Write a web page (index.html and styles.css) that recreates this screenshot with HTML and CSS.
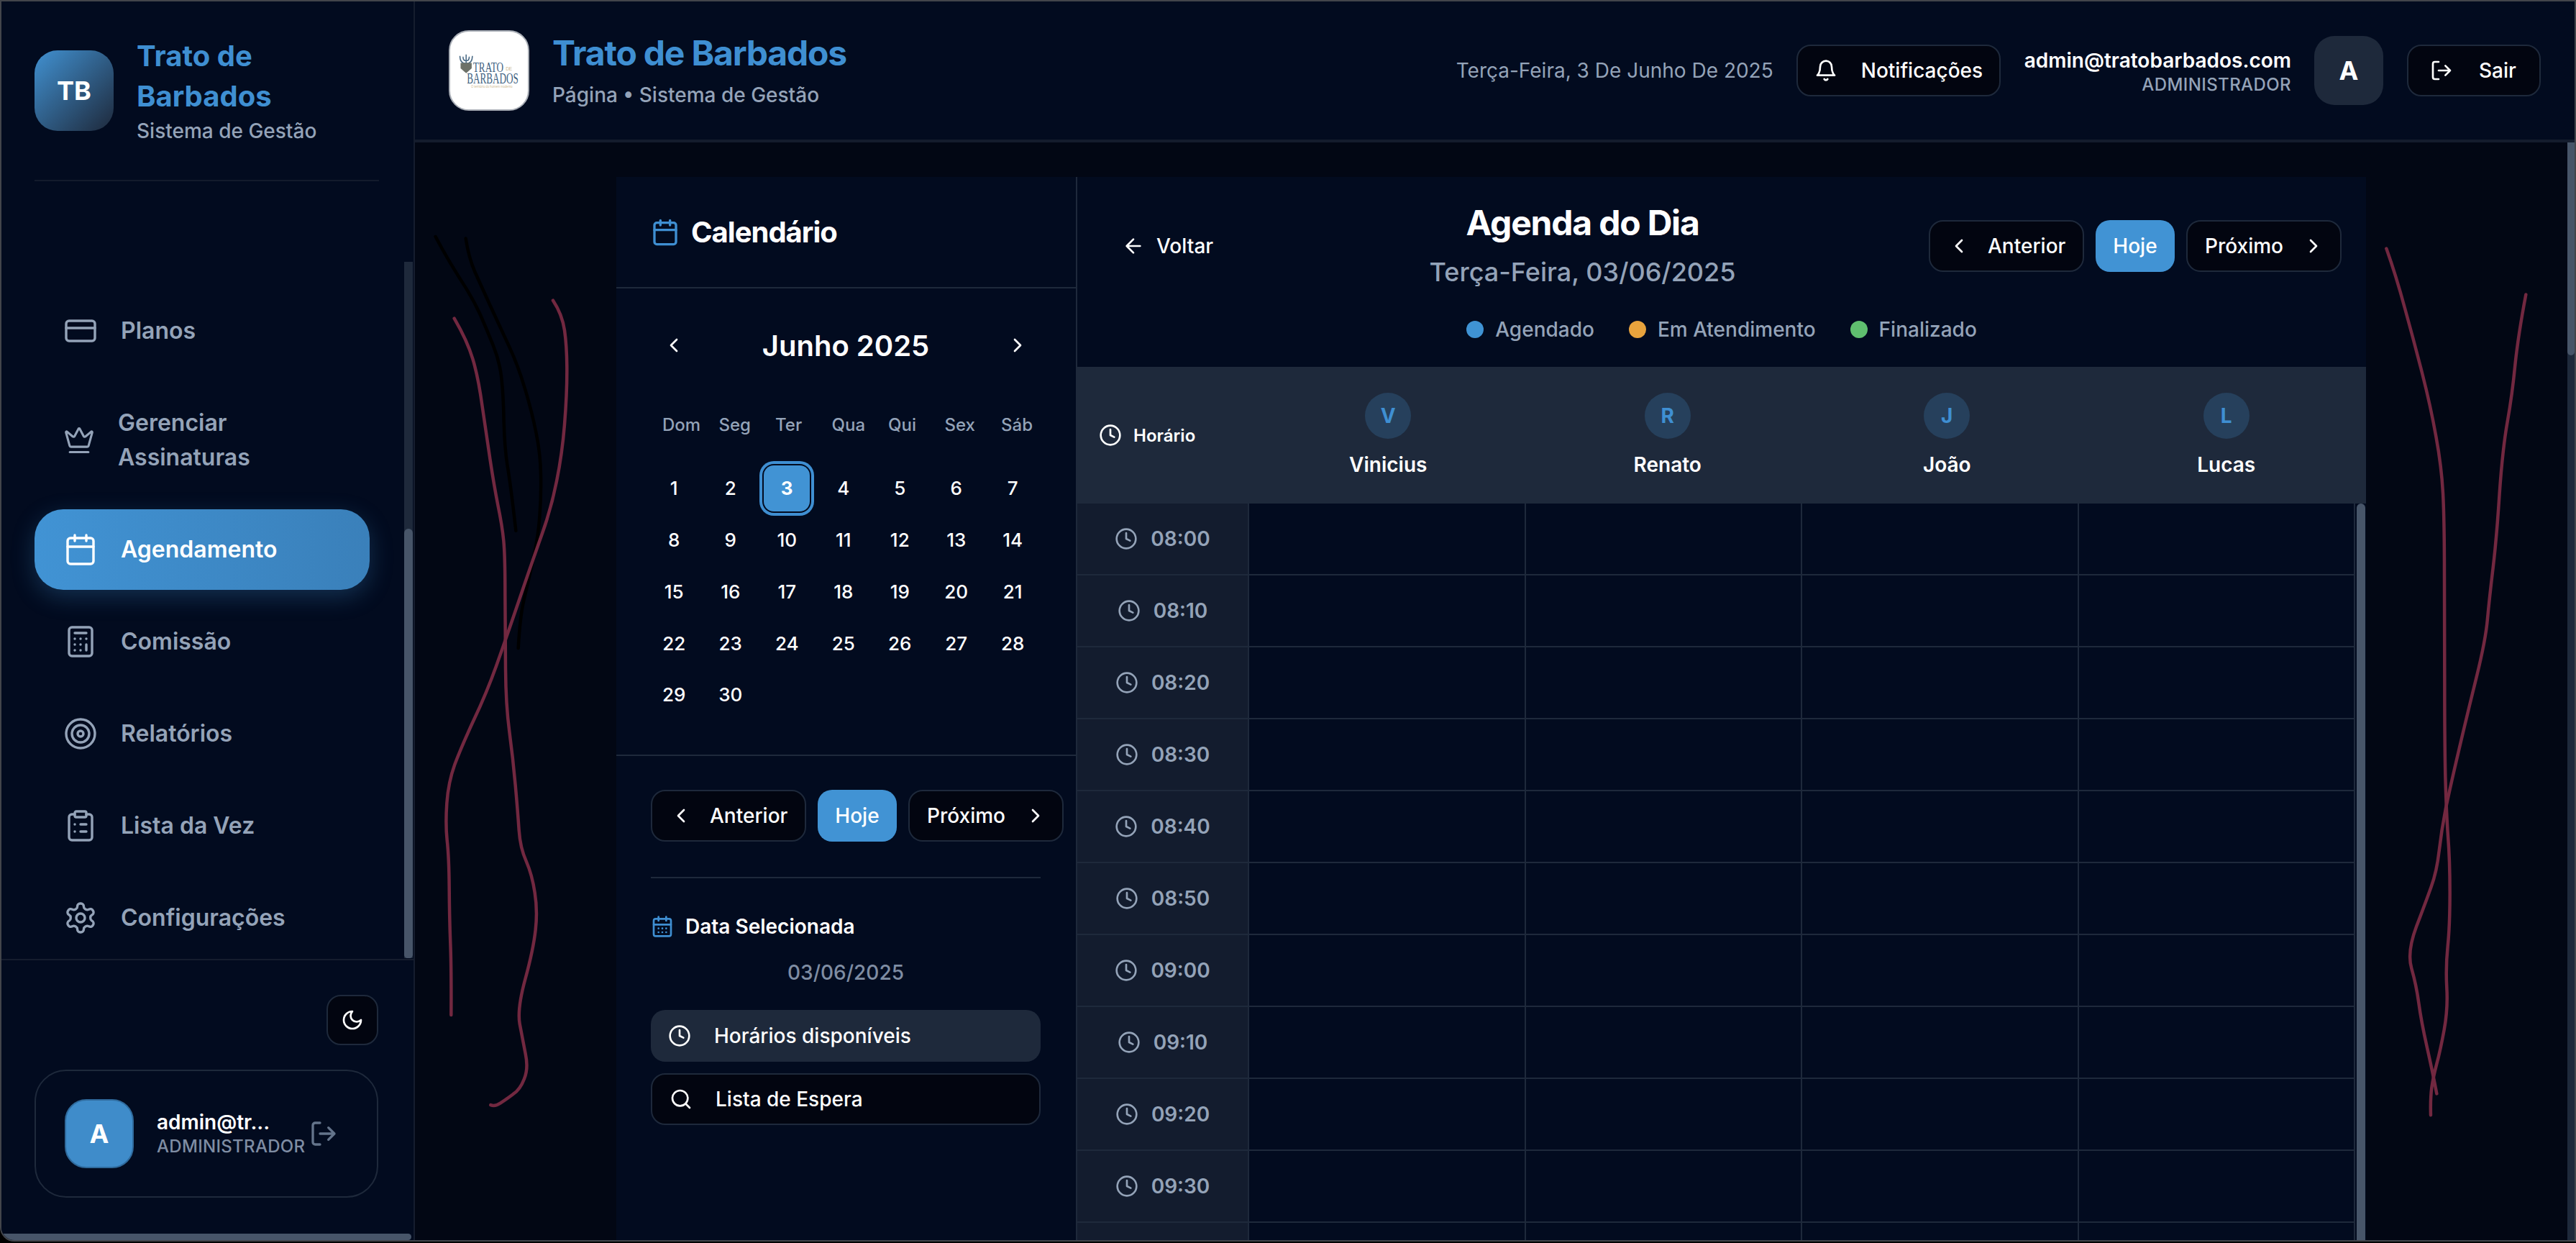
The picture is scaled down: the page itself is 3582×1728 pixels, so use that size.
FILE: index.html
```html
<!DOCTYPE html>
<html lang="pt-br">
<head>
  <meta charset="UTF-8">
  <title>Trato de Barbados</title>
  <link rel="stylesheet" href="styles.css">
</head>
<body>
  <svg class="sprite" width="0" height="0">
    <symbol id="i-card" viewBox="0 0 24 24"><rect x="2" y="5" width="20" height="14" rx="2"/><path d="M2 10h20"/></symbol>
    <symbol id="i-crown" viewBox="0 0 24 24"><path d="M11.562 3.266a.5.5 0 0 1 .876 0L15.39 8.87a1 1 0 0 0 1.516.294L21.183 5.5a.5.5 0 0 1 .798.519l-2.834 10.246a1 1 0 0 1-.956.734H5.81a1 1 0 0 1-.957-.734L2.02 6.02a.5.5 0 0 1 .798-.519l4.276 3.664a1 1 0 0 0 1.516-.294z"/><path d="M5 21h14"/></symbol>
    <symbol id="i-calendar" viewBox="0 0 24 24"><path d="M8 2v4M16 2v4"/><rect x="3" y="4" width="18" height="18" rx="2"/><path d="M3 10h18"/></symbol>
    <symbol id="i-calendar-days" viewBox="0 0 24 24"><path d="M8 2v4M16 2v4"/><rect x="3" y="4" width="18" height="18" rx="2"/><path d="M3 10h18M8 14h.01M12 14h.01M16 14h.01M8 18h.01M12 18h.01M16 18h.01"/></symbol>
    <symbol id="i-calculator" viewBox="0 0 24 24"><rect x="4" y="2" width="16" height="20" rx="2"/><path d="M8 6h8M16 14v4M16 10h.01M12 10h.01M8 10h.01M12 14h.01M8 14h.01M12 18h.01M8 18h.01"/></symbol>
    <symbol id="i-target" viewBox="0 0 24 24"><circle cx="12" cy="12" r="10"/><circle cx="12" cy="12" r="6"/><circle cx="12" cy="12" r="2"/></symbol>
    <symbol id="i-clipboard" viewBox="0 0 24 24"><rect x="8" y="2" width="8" height="4" rx="1"/><path d="M16 4h2a2 2 0 0 1 2 2v14a2 2 0 0 1-2 2H6a2 2 0 0 1-2-2V6a2 2 0 0 1 2-2h2M12 11h4M12 16h4M8 11h.01M8 16h.01"/></symbol>
    <symbol id="i-settings" viewBox="0 0 24 24"><path d="M12.22 2h-.44a2 2 0 0 0-2 2v.18a2 2 0 0 1-1 1.73l-.43.25a2 2 0 0 1-2 0l-.15-.08a2 2 0 0 0-2.73.73l-.22.38a2 2 0 0 0 .73 2.73l.15.1a2 2 0 0 1 1 1.72v.51a2 2 0 0 1-1 1.74l-.15.09a2 2 0 0 0-.73 2.73l.22.38a2 2 0 0 0 2.73.73l.15-.08a2 2 0 0 1 2 0l.43.25a2 2 0 0 1 1 1.73V20a2 2 0 0 0 2 2h.44a2 2 0 0 0 2-2v-.18a2 2 0 0 1 1-1.73l.43-.25a2 2 0 0 1 2 0l.15.08a2 2 0 0 0 2.73-.73l.22-.39a2 2 0 0 0-.73-2.73l-.15-.08a2 2 0 0 1-1-1.74v-.5a2 2 0 0 1 1-1.74l.15-.09a2 2 0 0 0 .73-2.73l-.22-.38a2 2 0 0 0-2.73-.73l-.15.08a2 2 0 0 1-2 0l-.43-.25a2 2 0 0 1-1-1.73V4a2 2 0 0 0-2-2z"/><circle cx="12" cy="12" r="3"/></symbol>
    <symbol id="i-moon" viewBox="0 0 24 24"><path d="M12 3a6 6 0 0 0 9 9 9 9 0 1 1-9-9Z"/></symbol>
    <symbol id="i-logout" viewBox="0 0 24 24"><path d="M9 21H5a2 2 0 0 1-2-2V5a2 2 0 0 1 2-2h4M16 17l5-5-5-5M21 12H9"/></symbol>
    <symbol id="i-bell" viewBox="0 0 24 24"><path d="M6 8a6 6 0 0 1 12 0c0 7 3 9 3 9H3s3-2 3-9M10.3 21a1.94 1.94 0 0 0 3.4 0"/></symbol>
    <symbol id="i-left" viewBox="0 0 24 24"><path d="m15 18-6-6 6-6"/></symbol>
    <symbol id="i-right" viewBox="0 0 24 24"><path d="m9 18 6-6-6-6"/></symbol>
    <symbol id="i-arrow" viewBox="0 0 24 24"><path d="m12 19-7-7 7-7M19 12H5"/></symbol>
    <symbol id="i-clock" viewBox="0 0 24 24"><circle cx="12" cy="12" r="10"/><path d="M12 6v6l4 2"/></symbol>
    <symbol id="i-search" viewBox="0 0 24 24"><circle cx="11" cy="11" r="8"/><path d="m21 21-4.3-4.3"/></symbol>
  </svg>

  <div class="window">
    <aside class="sidebar">
      <div class="side-head">
        <div class="side-logo">TB</div>
        <div>
          <div class="side-title">Trato de<br>Barbados</div>
          <div class="side-sub">Sistema de Gestão</div>
        </div>
      </div>

      <nav class="side-nav">
        <a class="nav-item"><svg class="icon nav-icon"><use href="#i-card"/></svg>Planos</a>
        <a class="nav-item nav-tall"><svg class="icon nav-icon nav-icon-small"><use href="#i-crown"/></svg><span>Gerenciar<br>Assinaturas</span></a>
        <a class="nav-item nav-active"><svg class="icon nav-icon"><use href="#i-calendar"/></svg>Agendamento</a>
        <a class="nav-item"><svg class="icon nav-icon"><use href="#i-calculator"/></svg>Comissão</a>
        <a class="nav-item"><svg class="icon nav-icon"><use href="#i-target"/></svg>Relatórios</a>
        <a class="nav-item"><svg class="icon nav-icon"><use href="#i-clipboard"/></svg>Lista da Vez</a>
        <a class="nav-item"><svg class="icon nav-icon"><use href="#i-settings"/></svg>Configurações</a>
      </nav>
      <div class="side-track"><div class="side-thumb"></div></div>

      <div class="side-foot">
        <button class="theme-btn"><svg class="icon icon-32"><use href="#i-moon"/></svg></button>
        <div class="user-card">
          <div class="user-avatar">A</div>
          <div class="user-text">
            <div class="user-mail">admin@tr...</div>
            <div class="user-role">ADMINISTRADOR</div>
          </div>
          <svg class="icon user-out"><use href="#i-logout"/></svg>
        </div>
      </div>
      <div class="side-hbar"></div>
    </aside>

    <main class="main">
      <header class="topbar">
        <div class="brand">
          <svg class="brand-logo" viewBox="0 0 112 112">
            <path class="logo-trident" d="M23 33v20M14 35c0 7 3 11 9 11s9-4 9-11M18.500 36c0 4 1 6 4.500 6s4.500-2 4.500-6"/>
            <path class="logo-beard" d="M15 45h16v8l-8 7-8-7z"/>
            <text class="logo-word" transform="translate(33 58) scale(.72 1)" font-size="19">TRATO</text>
            <text class="logo-de" transform="translate(80 56) scale(.85 1)" font-size="8">DE</text>
            <text class="logo-word" transform="translate(24 75) scale(.65 1)" font-size="21">BARBADOS</text>
            <text class="logo-de" transform="translate(30 81) scale(.86 1)" font-size="5">O território do homem moderno</text>
          </svg>
          <div>
            <div class="brand-title">Trato de Barbados</div>
            <div class="brand-sub">Página • Sistema de Gestão</div>
          </div>
        </div>
        <div class="top-right">
          <span class="top-date">Terça-Feira, 3 De Junho De 2025</span>
          <button class="btn btn-notif"><svg class="icon icon-32"><use href="#i-bell"/></svg>Notificações</button>
          <div class="top-user">
            <div class="top-mail">admin@tratobarbados.com</div>
            <div class="top-role">ADMINISTRADOR</div>
          </div>
          <div class="top-avatar">A</div>
          <button class="btn btn-out"><svg class="icon icon-32"><use href="#i-logout"/></svg>Sair</button>
        </div>
      </header>

      <div class="content">
        <section class="panel">
          <div class="cal-col">
            <div class="cal-head">
              <svg class="icon cal-head-icon"><use href="#i-calendar"/></svg>
              <h2>Calendário</h2>
            </div>

            <div class="cal-box">
              <div class="cal-month">
                <svg class="icon icon-32"><use href="#i-left"/></svg>
                <span>Junho 2025</span>
                <svg class="icon icon-32"><use href="#i-right"/></svg>
              </div>
              <div class="cal-week">
                <span>Dom</span><span>Seg</span><span>Ter</span><span>Qua</span><span>Qui</span><span>Sex</span><span>Sáb</span>
              </div>
              <div class="cal-days">
                <span>1</span><span>2</span><span class="day-on"><b>3</b></span><span>4</span><span>5</span><span>6</span><span>7</span>
                <span>8</span><span>9</span><span>10</span><span>11</span><span>12</span><span>13</span><span>14</span>
                <span>15</span><span>16</span><span>17</span><span>18</span><span>19</span><span>20</span><span>21</span>
                <span>22</span><span>23</span><span>24</span><span>25</span><span>26</span><span>27</span><span>28</span>
                <span>29</span><span>30</span>
              </div>
            </div>

            <div class="cal-foot">
              <div class="pager">
                <button class="btn btn-prev"><svg class="icon icon-32"><use href="#i-left"/></svg>Anterior</button>
                <button class="btn btn-today">Hoje</button>
                <button class="btn btn-next">Próximo<svg class="icon icon-32"><use href="#i-right"/></svg></button>
              </div>
              <div class="cal-line"></div>
              <div class="sel-title"><svg class="icon icon-32 icon-blue"><use href="#i-calendar-days"/></svg>Data Selecionada</div>
              <div class="sel-date">03/06/2025</div>
              <button class="btn side-btn side-btn-on"><svg class="icon icon-32"><use href="#i-clock"/></svg>Horários disponíveis</button>
              <button class="btn side-btn"><svg class="icon icon-32"><use href="#i-search"/></svg>Lista de Espera</button>
            </div>
          </div>

          <div class="day-col">
            <div class="day-top">
              <div class="day-row">
                <button class="back"><svg class="icon icon-32"><use href="#i-arrow"/></svg>Voltar</button>
                <div class="day-title">
                  <h1>Agenda do Dia</h1>
                  <p>Terça-Feira, 03/06/2025</p>
                </div>
                <div class="pager">
                  <button class="btn btn-prev"><svg class="icon icon-32"><use href="#i-left"/></svg>Anterior</button>
                  <button class="btn btn-today">Hoje</button>
                  <button class="btn btn-next">Próximo<svg class="icon icon-32"><use href="#i-right"/></svg></button>
                </div>
              </div>
              <div class="legend">
                <span><i class="dot dot-blue"></i>Agendado</span>
                <span><i class="dot dot-orange"></i>Em Atendimento</span>
                <span><i class="dot dot-green"></i>Finalizado</span>
              </div>
            </div>

            <div class="grid-head">
              <div class="grid-hour"><svg class="icon icon-32"><use href="#i-clock"/></svg>Horário</div>
              <div class="barber"><div class="barber-pic">V</div>Vinicius</div>
              <div class="barber"><div class="barber-pic">R</div>Renato</div>
              <div class="barber"><div class="barber-pic">J</div>João</div>
              <div class="barber"><div class="barber-pic">L</div>Lucas</div>
            </div>

            <div class="grid-body">
              <div class="row"><div class="time"><svg class="icon icon-32"><use href="#i-clock"/></svg>08:00</div><div class="slot"></div><div class="slot"></div><div class="slot"></div><div class="slot"></div></div>
              <div class="row"><div class="time"><svg class="icon icon-32"><use href="#i-clock"/></svg>08:10</div><div class="slot"></div><div class="slot"></div><div class="slot"></div><div class="slot"></div></div>
              <div class="row"><div class="time"><svg class="icon icon-32"><use href="#i-clock"/></svg>08:20</div><div class="slot"></div><div class="slot"></div><div class="slot"></div><div class="slot"></div></div>
              <div class="row"><div class="time"><svg class="icon icon-32"><use href="#i-clock"/></svg>08:30</div><div class="slot"></div><div class="slot"></div><div class="slot"></div><div class="slot"></div></div>
              <div class="row"><div class="time"><svg class="icon icon-32"><use href="#i-clock"/></svg>08:40</div><div class="slot"></div><div class="slot"></div><div class="slot"></div><div class="slot"></div></div>
              <div class="row"><div class="time"><svg class="icon icon-32"><use href="#i-clock"/></svg>08:50</div><div class="slot"></div><div class="slot"></div><div class="slot"></div><div class="slot"></div></div>
              <div class="row"><div class="time"><svg class="icon icon-32"><use href="#i-clock"/></svg>09:00</div><div class="slot"></div><div class="slot"></div><div class="slot"></div><div class="slot"></div></div>
              <div class="row"><div class="time"><svg class="icon icon-32"><use href="#i-clock"/></svg>09:10</div><div class="slot"></div><div class="slot"></div><div class="slot"></div><div class="slot"></div></div>
              <div class="row"><div class="time"><svg class="icon icon-32"><use href="#i-clock"/></svg>09:20</div><div class="slot"></div><div class="slot"></div><div class="slot"></div><div class="slot"></div></div>
              <div class="row"><div class="time"><svg class="icon icon-32"><use href="#i-clock"/></svg>09:30</div><div class="slot"></div><div class="slot"></div><div class="slot"></div><div class="slot"></div></div>
              <div class="row"><div class="time"></div><div class="slot"></div><div class="slot"></div><div class="slot"></div><div class="slot"></div></div>
              <div class="grid-thumb"></div>
            </div>
          </div>
        </section>
      </div>
      <div class="main-track"><div class="main-thumb"></div></div>
    </main>

    <!-- risco a mano por cima da tela -->
    <svg class="scribble scribble-left" viewBox="0 0 900 1568" preserveAspectRatio="none">
      <path class="ink-black" d="M107 35Q140 60 170 80Q200 100 235 122Q270 145 295 167Q320 190 347 217Q375 245 382 272Q390 300 392 345Q395 390 407 420Q420 450 442 528"/>
      <path class="ink-black" d="M233 38Q245 70 272 95Q300 120 340 155Q380 190 415 220Q450 250 480 290Q510 330 527 365Q545 400 546 435Q548 470 541 505Q535 540 512 580Q490 620 475 645Q460 670 452 725"/>
      <path class="ink-red" d="M185 172Q240 210 262 240Q285 270 302 320Q320 370 335 410Q350 450 367 485Q385 520 391 545Q397 570 397 635Q398 700 399 760Q400 820 415 865Q430 910 440 955Q450 1000 455 1030Q460 1060 485 1082Q510 1105 521 1135Q533 1165 524 1197Q515 1230 481 1280Q447 1330 458 1355Q470 1380 482 1405Q495 1430 477 1447Q460 1465 430 1473Q400 1482 377 1488Q355 1494 337 1491"/>
      <path class="ink-red" d="M597 142Q635 165 645 192Q655 220 655 260Q655 300 645 350Q635 400 612 445Q590 490 550 535Q510 580 455 645Q400 710 360 755Q320 800 267 845Q215 890 187 920Q160 950 154 985Q148 1020 155 1047Q163 1075 164 1127Q165 1180 169 1220Q173 1260 172 1340"/>
    </svg>
    <svg class="scribble scribble-right" viewBox="0 0 966 1568" preserveAspectRatio="none">
      <path class="ink-red" d="M175 55Q215 100 252 155Q290 210 325 265Q360 320 382 370Q405 420 411 465Q417 510 417 605Q418 700 418 790Q418 880 421 940Q425 1000 432 1040Q440 1080 440 1135Q440 1190 431 1225Q422 1260 427 1295Q432 1330 416 1365Q400 1400 385 1422Q370 1445 364 1462Q358 1480 360 1508"/>
      <path class="ink-red" d="M757 132Q725 200 712 250Q700 300 680 345Q660 390 647 465Q635 540 620 590Q605 640 597 675Q590 710 550 775Q510 840 475 900Q440 960 422 995Q405 1030 395 1065Q385 1100 362 1125Q340 1150 300 1192Q260 1235 280 1262Q300 1290 310 1320Q320 1350 345 1395Q370 1440 385 1472"/>
    </svg>
  </div>
</body>
</html>
```

FILE: styles.css
```css
* { box-sizing: border-box; }
html, body { margin: 0; height: 100%; }
body { background: #000; font-family: Inter, "Noto Sans", sans-serif; color: #fff; overflow: hidden; }
h1, h2, p { margin: 0; }
button { font-family: inherit; color: inherit; cursor: pointer; }
.sprite { position: absolute; }

.icon { fill: none; stroke: currentColor; stroke-width: 2; stroke-linecap: round; stroke-linejoin: round; flex: none; }
.icon-32 { width: 32px; height: 32px; }
.icon-blue { color: #3f8fd2; }

.window { position: relative; display: flex; width: 3582px; height: 1726px; border: 2px solid #42454b; border-bottom-left-radius: 20px; overflow: hidden; background: #020b1f; }

/* sidebar */
.sidebar { position: relative; display: flex; flex-direction: column; flex: none; width: 575px; background: #020b1f; border-right: 2px solid #151d2e; }
.side-head { display: flex; align-items: center; gap: 32px; flex: none; height: 250px; margin: 0 48px 0 46px; border-bottom: 2px solid #131b2c; }
.side-logo { display: flex; align-items: center; justify-content: center; flex: none; width: 110px; height: 112px; border-radius: 32px; background: linear-gradient(135deg, #4191d1, #1e293b); font-size: 36px; font-weight: 700; }
.side-title { font-size: 40px; line-height: 56px; font-weight: 700; color: #3f8fd2; }
.side-sub { font-size: 28px; line-height: 40px; font-weight: 500; color: #94a3b8; }

.side-nav { display: flex; flex-direction: column; gap: 16px; flex: 1; min-height: 0; padding: 152px 61px 0 46px; overflow: hidden; }
.nav-item { display: flex; align-items: center; gap: 32px; flex: none; height: 112px; padding-left: 40px; border-radius: 40px; font-size: 32px; line-height: 48px; font-weight: 600; color: #94a3b8; }
.nav-tall { height: 160px; }
.nav-icon { width: 48px; height: 48px; stroke-width: 1.7; }
.nav-icon-small { width: 44px; height: 44px; }
.nav-active { background: linear-gradient(90deg, #4193d4, #3a80ba); color: #fff; box-shadow: 0 10px 32px rgba(65, 145, 209, .28); }
.side-track { position: absolute; right: 1px; top: 362px; width: 12px; height: 968px; background: #1e293b; }
.side-thumb { position: absolute; left: 0; right: 0; top: 371px; bottom: 0; border-radius: 8px 8px 6px 6px; background: #475569; }

.side-foot { display: flex; flex-direction: column; align-items: flex-end; flex: none; padding: 48px 49px 50px 46px; border-top: 2px solid #151d2e; }
.theme-btn { display: flex; align-items: center; justify-content: center; width: 72px; height: 70px; padding: 0; border: 2px solid #1e293b; border-radius: 20px; background: #020510; }
.user-card { display: flex; align-items: center; width: 478px; height: 178px; margin-top: 34px; padding-left: 40px; border: 2px solid #1e293b; border-radius: 44px; }
.user-avatar { display: flex; align-items: center; justify-content: center; flex: none; width: 96px; height: 96px; border: 2px solid #2f6a9c; border-radius: 30px; background: #3f8cca; font-size: 36px; font-weight: 700; }
.user-text { flex: none; width: 212px; margin-left: 32px; }
.user-mail { white-space: nowrap; font-size: 28px; line-height: 36px; font-weight: 600; }
.user-role { font-size: 24px; line-height: 32px; font-weight: 500; letter-spacing: .3px; color: #7f8da3; }
.user-out { width: 40px; height: 40px; color: #64748b; }
.side-hbar { flex: none; height: 9px; margin-right: 3px; border-radius: 0 5px 5px 0; background: #475569; }

/* topo */
.main { position: relative; display: flex; flex-direction: column; flex: 1; min-width: 0; background: #020714; }
.topbar { display: flex; align-items: center; justify-content: space-between; flex: none; height: 196px; padding: 0 47px; background: #020b1f; border-bottom: 4px solid #141c2d; }
.brand { display: flex; align-items: center; gap: 32px; }
.brand-logo { flex: none; width: 112px; height: 112px; border: 2px solid #a8adb5; border-radius: 28px; background: #fff; }
.logo-trident { fill: none; stroke: #4a6a85; stroke-width: 1.6; }
.logo-beard { fill: #6d7168; }
.logo-word { font-family: "Liberation Serif", serif; fill: #3e5f7f; }
.logo-de { font-family: "Liberation Sans", sans-serif; fill: #cdb98f; }
.brand-title { font-size: 48px; line-height: 60px; font-weight: 700; letter-spacing: -1.2px; color: #3f8fd2; }
.brand-sub { margin-top: 8px; font-size: 28px; line-height: 40px; font-weight: 500; color: #94a3b8; }

.top-right { display: flex; align-items: center; gap: 32px; }
.top-date { font-size: 28px; font-weight: 400; color: #94a3b8; }
.top-user { text-align: right; }
.top-mail { font-size: 28px; line-height: 40px; font-weight: 600; }
.top-role { font-size: 24px; line-height: 28px; font-weight: 500; letter-spacing: .4px; color: #94a3b8; }
.top-avatar { display: flex; align-items: center; justify-content: center; width: 96px; height: 96px; border-radius: 28px; background: #1e293b; font-size: 36px; font-weight: 700; }

.btn { display: inline-flex; align-items: center; flex: none; height: 72px; border: 2px solid #1e293b; border-radius: 20px; background: #020510; font-size: 28px; font-weight: 500; white-space: nowrap; }
.btn-notif { gap: 33px; width: 284px; margin-right: 1px; padding: 0 0 0 23px; }
.btn-out { gap: 36px; width: 186px; margin-left: 1px; padding: 0 0 0 30px; }
.btn-prev { gap: 24px; width: 216px; padding: 0 0 0 24px; }
.btn-next { gap: 26px; width: 216px; padding: 0 0 0 24px; }
.btn-today { justify-content: center; width: 110px; padding: 0; border: 0; background: #4193d4; }

/* painel */
.content { display: flex; justify-content: center; flex: 1; min-height: 0; padding: 48px 10px 0 0; background: #020714; }
.panel { display: flex; flex: none; width: 2433px; overflow: hidden; background: #020b1f; }

.cal-col { flex: none; width: 641px; border-right: 2px solid #1e293b; }
.cal-head { display: flex; align-items: center; gap: 16px; height: 155px; padding-left: 48px; border-bottom: 2px solid #1e293b; }
.cal-head-icon { width: 40px; height: 40px; color: #3f8fd2; }
.cal-head h2 { font-size: 40px; font-weight: 700; letter-spacing: -1px; }

.cal-box { height: 650px; padding: 47px 0 0 41px; border-bottom: 2px solid #1e293b; }
.cal-month { display: flex; align-items: center; justify-content: space-between; width: 550px; height: 64px; padding: 0 17px 0 23px; }
.cal-month span { font-size: 40px; font-weight: 600; }
.cal-week { display: grid; grid-template-columns: repeat(7, 78.5px); height: 40px; margin-top: 59px; padding-left: 23px; font-size: 24px; line-height: 40px; font-weight: 500; color: #94a3b8; }
.cal-days { display: grid; grid-template-columns: repeat(7, 78.5px); grid-auto-rows: 71.75px; margin-top: 32px; font-size: 26px; font-weight: 500; }
.cal-days span { display: flex; align-items: center; justify-content: center; }
.cal-days .day-on b { display: flex; align-items: center; justify-content: center; width: 64px; height: 64px; border-radius: 14px; background: #4193d4; box-shadow: 0 0 0 2px #020b1f, 0 0 0 6px #3f8fd2; font-weight: 700; }

.cal-foot { padding: 47px 49px 0 48px; }
.pager { display: flex; gap: 16px; flex: none; }
.cal-line { height: 2px; margin-top: 49px; background: #1e293b; }
.sel-title { display: flex; align-items: center; gap: 16px; height: 40px; margin-top: 47px; font-size: 28px; font-weight: 600; }
.sel-date { height: 40px; margin-top: 24px; font-size: 28px; line-height: 40px; font-weight: 500; text-align: center; color: #7f8da3; }
.side-btn { gap: 32px; width: 100%; margin-top: 16px; padding: 0 0 0 24px; }
.side-btn-on { margin-top: 32px; padding-left: 24px; border: 0; background: #1e293b; }

/* agenda */
.day-col { display: flex; flex-direction: column; flex: 1; min-width: 0; }
.day-top { flex: none; height: 264px; padding-top: 32px; }
.day-row { display: flex; align-items: center; justify-content: space-between; padding: 0 34px 0 30px; }
.back { display: flex; align-items: center; gap: 16px; padding: 0 32px; border: 0; background: none; font-size: 28px; font-weight: 500; }
.day-title { text-align: center; }
.day-title h1 { font-size: 48px; line-height: 64px; font-weight: 700; letter-spacing: -1.2px; }
.day-title p { margin-top: 8px; font-size: 36px; line-height: 56px; font-weight: 500; color: #94a3b8; }
.legend { display: flex; justify-content: center; gap: 48px; margin-top: 32px; font-size: 28px; line-height: 40px; font-weight: 500; color: #94a3b8; }
.legend span { display: flex; align-items: center; gap: 16px; }
.dot { width: 24px; height: 24px; border-radius: 50%; }
.dot-blue { background: #3f93d4; }
.dot-orange { background: #e8a33d; }
.dot-green { background: #5fbf6f; }

.grid-head { display: flex; flex: none; height: 190px; background: #1e293b; }
.grid-hour { display: flex; align-items: center; gap: 16px; flex: none; width: 238px; padding-left: 30px; font-size: 24px; font-weight: 600; }
.barber { display: flex; flex-direction: column; align-items: center; gap: 16px; flex: 1; padding-top: 36px; font-size: 28px; line-height: 40px; font-weight: 600; }
.barber-pic { display: flex; align-items: center; justify-content: center; width: 64px; height: 64px; border-radius: 50%; background: #26405c; font-size: 28px; font-weight: 700; color: #3f8fd2; }

.grid-body { position: relative; flex: 1; min-height: 0; overflow: hidden; }
.row { display: flex; height: 100px; }
.time { display: flex; align-items: center; justify-content: center; gap: 18px; flex: none; width: 239px; border-right: 2px solid #1e293b; border-bottom: 2px solid #1e293b; background: #131c2e; font-size: 28px; font-weight: 600; color: #94a3b8; }
.slot { flex: none; width: 384.5px; border-right: 2px solid #1e293b; border-bottom: 2px solid #1e293b; }
.grid-thumb { position: absolute; right: 1px; top: 0; bottom: 0; width: 12px; border-radius: 8px 8px 0 0; background: #475569; }

.main-track { position: absolute; right: 0; top: 196px; bottom: 0; width: 10px; background: #1e293b; }
.main-thumb { height: 296px; border-radius: 0 0 6px 6px; background: #475569; }

/* riscos */
.scribble { position: absolute; pointer-events: none; fill: none; }
.scribble-left { left: 568px; top: 298px; width: 300px; height: 1300px; }
.scribble-right { left: 3258px; top: 298px; width: 322px; height: 1300px; }
.ink-red, .ink-black { fill: none; stroke-linecap: round; stroke-linejoin: round; vector-effect: non-scaling-stroke; }
.ink-red { stroke: #722840; stroke-width: 4.5px; }
.ink-black { stroke: #000; stroke-width: 4.5px; }
```
